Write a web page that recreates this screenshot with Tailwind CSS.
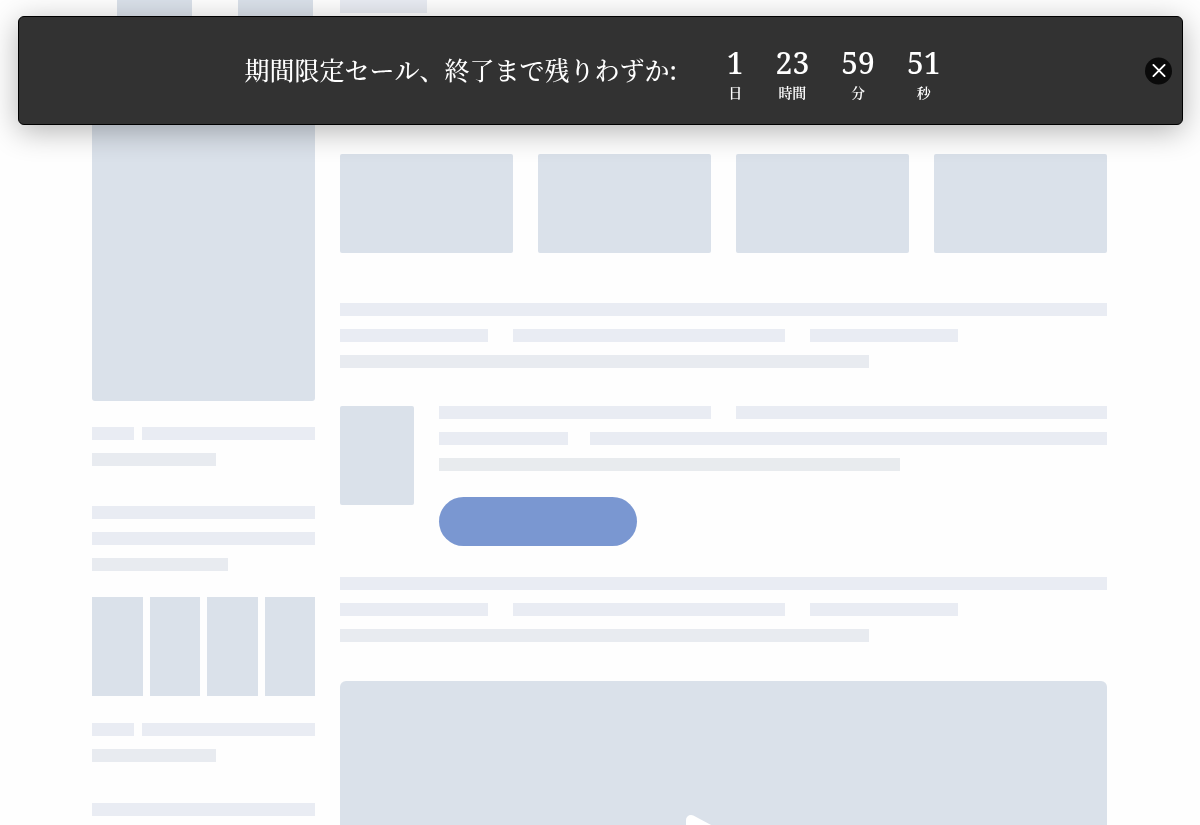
<!DOCTYPE html>
<html lang="ja">
<head>
    <meta charset="UTF-8">
    <meta name="viewport" content="width=device-width, initial-scale=1.0">
    <title>期間限定セール</title>
    <script src="https://cdn.jsdelivr.net/npm/@tailwindcss/browser@4"></script>
</head>
<body class="bg-[#fefefe]">
    <!-- Countdown banner -->
    <aside class="fixed left-[18px] right-[17px] top-4 z-10 flex items-center justify-center gap-[50px] h-[109px] pr-4 rounded-md border border-black bg-[#323232] text-white font-medium [font-kerning:none] shadow-[0_6px_30px_rgba(0,0,0,0.3)] font-['Noto_Serif','DejaVu_Serif_Condensed','Noto_Serif_CJK_JP','Noto_Sans_CJK_JP',serif]">
        <p class="pb-0.5 text-[25px] leading-8 whitespace-nowrap">期間限定セール、終了まで残りわずか:</p>
        <div class="flex gap-8 pt-2 text-center" role="timer">
            <div>
                <div id="days" class="text-[30px] leading-9">1</div>
                <div class="text-[14px] leading-6 font-semibold">日</div>
            </div>
            <div>
                <div id="hours" class="text-[30px] leading-9">23</div>
                <div class="text-[14px] leading-6 font-semibold">時間</div>
            </div>
            <div>
                <div id="minutes" class="text-[30px] leading-9">59</div>
                <div class="text-[14px] leading-6 font-semibold">分</div>
            </div>
            <div>
                <div id="seconds" class="text-[30px] leading-9">51</div>
                <div class="text-[14px] leading-6 font-semibold">秒</div>
            </div>
        </div>
        <button type="button" aria-label="閉じる" class="absolute right-[10px] top-1/2 -translate-y-1/2 flex items-center justify-center size-[27px] rounded-full bg-[#0a0a0a] cursor-pointer">
            <svg class="size-[14px]" viewBox="0 0 14 14" fill="none" stroke="white" stroke-width="1.9" stroke-linecap="round"><path d="M1.4 1.4 12.6 12.6M12.6 1.4 1.4 12.6"/></svg>
        </button>
    </aside>

    <!-- Page skeleton -->
    <main class="h-screen overflow-hidden pl-[92px] pr-[93px]" aria-hidden="true">
        <div class="grid grid-cols-[223fr_767fr] gap-x-[25px]">
            <!-- Sidebar -->
            <div>
                <div class="flex gap-[46px] h-10 pl-[25px]">
                    <div class="w-[75px] shrink-0 bg-[#dae1ea]"></div>
                    <div class="w-[75px] shrink-0 bg-[#dae1ea]"></div>
                </div>
                <div class="mt-5 h-[341px] rounded-[3px] bg-[#dae1ea]"></div>
                <div class="mt-[26px] flex flex-col gap-[13px]">
                    <div class="flex gap-2">
                        <div class="h-[13px] w-[42px] bg-[#e9ecf3]"></div>
                        <div class="h-[13px] flex-1 bg-[#e9ecf3]"></div>
                    </div>
                    <div class="h-[13px] w-[124px] bg-[#e8ebf0]"></div>
                </div>
                <div class="mt-10 flex flex-col gap-[13px]">
                    <div class="h-[13px] bg-[#e9ecf3]"></div>
                    <div class="h-[13px] bg-[#e9ecf3]"></div>
                    <div class="h-[13px] w-[136px] bg-[#e8ebf0]"></div>
                </div>
                <div class="mt-[26px] grid grid-cols-4 gap-[7px]">
                    <div class="h-[99px] bg-[#dae1ea]"></div>
                    <div class="h-[99px] bg-[#dae1ea]"></div>
                    <div class="h-[99px] bg-[#dae1ea]"></div>
                    <div class="h-[99px] bg-[#dae1ea]"></div>
                </div>
                <div class="mt-[27px] flex flex-col gap-[13px]">
                    <div class="flex gap-2">
                        <div class="h-[13px] w-[42px] bg-[#e9ecf3]"></div>
                        <div class="h-[13px] flex-1 bg-[#e9ecf3]"></div>
                    </div>
                    <div class="h-[13px] w-[124px] bg-[#e8ebf0]"></div>
                </div>
                <div class="mt-[41px] flex flex-col gap-[13px]">
                    <div class="h-[13px] bg-[#e9ecf3]"></div>
                    <div class="h-[13px] bg-[#e9ecf3]"></div>
                </div>
            </div>

            <!-- Content -->
            <div>
                <div class="h-[154px]">
                    <div class="h-[13px] w-[87px] bg-[#e9ecf3]"></div>
                </div>
                <div class="grid grid-cols-4 gap-[25px]">
                    <div class="h-[99px] rounded-[2px] bg-[#dae1ea]"></div>
                    <div class="h-[99px] rounded-[2px] bg-[#dae1ea]"></div>
                    <div class="h-[99px] rounded-[2px] bg-[#dae1ea]"></div>
                    <div class="h-[99px] rounded-[2px] bg-[#dae1ea]"></div>
                </div>
                <div class="mt-[50px] flex flex-col gap-[13px]">
                    <div class="h-[13px] bg-[#e9ecf3]"></div>
                    <div class="grid grid-cols-[148fr_272fr_148fr_124fr] gap-[25px]">
                        <div class="h-[13px] bg-[#e9ecf3]"></div>
                        <div class="h-[13px] bg-[#e9ecf3]"></div>
                        <div class="h-[13px] bg-[#e9ecf3]"></div>
                    </div>
                    <div class="h-[13px] w-[69%] bg-[#e8ebf0]"></div>
                </div>
                <div class="mt-[38px] flex gap-[25px]">
                    <div class="h-[99px] w-[74px] rounded-[2px] bg-[#dae1ea]"></div>
                    <div class="flex-1">
                        <div class="flex flex-col gap-[13px]">
                            <div class="grid grid-cols-[272fr_371fr] gap-[25px]">
                                <div class="h-[13px] bg-[#e9ecf3]"></div>
                                <div class="h-[13px] bg-[#e9ecf3]"></div>
                            </div>
                            <div class="grid grid-cols-[129fr_517fr] gap-[22px]">
                                <div class="h-[13px] bg-[#e9ecf3]"></div>
                                <div class="h-[13px] bg-[#e9ecf3]"></div>
                            </div>
                            <div class="h-[13px] w-[69%] bg-[#e8ebee]"></div>
                        </div>
                        <div class="mt-[26px] h-[49px] w-[198px] rounded-full bg-[#7a97d1]"></div>
                    </div>
                </div>
                <div class="mt-[31px] flex flex-col gap-[13px]">
                    <div class="h-[13px] bg-[#e9ecf3]"></div>
                    <div class="grid grid-cols-[148fr_272fr_148fr_124fr] gap-[25px]">
                        <div class="h-[13px] bg-[#e9ecf3]"></div>
                        <div class="h-[13px] bg-[#e9ecf3]"></div>
                        <div class="h-[13px] bg-[#e9ecf3]"></div>
                    </div>
                    <div class="h-[13px] w-[69%] bg-[#e8ebf0]"></div>
                </div>
                <div class="mt-[39px] flex items-center justify-center h-[360px] rounded-md bg-[#dae1ea]">
                    <svg class="w-[76px] h-[92px]" viewBox="0 0 76 92" fill="white" stroke="white" stroke-width="10" stroke-linejoin="round"><path d="M5 5 71 40 71 52 5 87Z"/></svg>
                </div>
            </div>
        </div>
    </main>

    <script>
        // Remaining time in seconds: 1 day 23:59:51
        let remaining = 172791;

        function tick() {
            if (remaining <= 0) return;
            remaining--;
            document.getElementById('days').textContent = Math.floor(remaining / 86400);
            document.getElementById('hours').textContent = Math.floor(remaining / 3600) % 24;
            document.getElementById('minutes').textContent = Math.floor(remaining / 60) % 60;
            document.getElementById('seconds').textContent = remaining % 60;
        }

        const banner = document.querySelector('aside');
        banner.querySelector('button').addEventListener('click', () => {
            banner.remove();
        });
        // The clock starts once the visitor moves over the page
        document.addEventListener('pointermove', () => setInterval(tick, 1000), { once: true });
    </script>
</body>
</html>
